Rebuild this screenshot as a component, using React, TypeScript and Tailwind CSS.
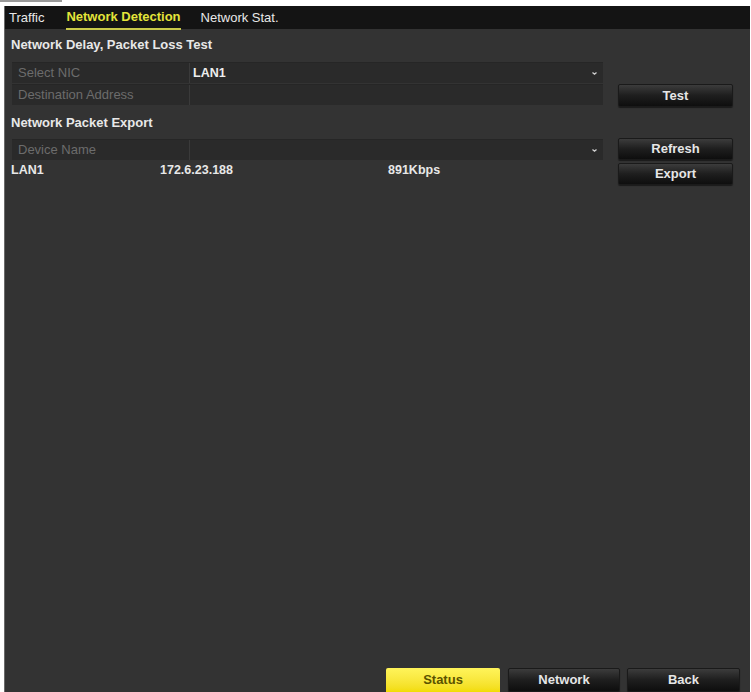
import React from "react";

const font = { fontFamily: '"Liberation Sans", Arial, sans-serif' };

function Arrow() {
  return (
    <svg width="7" height="5" viewBox="0 0 7 5" className="mr-[5px]">
      <path d="M1.5 1.5 L3.5 3.2 L5.5 1.5" stroke="#d0d0d0" strokeWidth="1.3" fill="none" />
    </svg>
  );
}

function Row({ label, value, arrow }: { label: string; value?: string; arrow?: boolean }) {
  return (
    <div className="ml-[1px] flex h-[21px] w-[591px] bg-[#2a2a2a] border-t border-[#262626]">
      <div className="flex w-[178px] items-center border-r border-[#3a3a3a] pl-[6px] text-[13px] text-[#6c6c6c]">
        {label}
      </div>
      <div className="flex flex-1 items-center justify-between pl-[3px] text-[12.5px] font-bold text-[#eeeeee]">
        <span>{value ?? ""}</span>
        {arrow ? <Arrow /> : null}
      </div>
    </div>
  );
}

function DarkButton({ label, w = "w-[115px]", h = "h-[22px]" }: { label: string; w?: string; h?: string }) {
  return (
    <div
      className={`${w} ${h} flex items-center justify-center rounded-[2px] border border-[#1a1a1a] bg-gradient-to-b from-[#3c3c3c] via-[#1e1e1e] to-[#0e0e0e] text-[13px] font-bold text-[#e6e6e6] shadow-[0_1px_1px_rgba(0,0,0,0.5)]`}
    >
      {label}
    </div>
  );
}

export default function App() {
  return (
    <div className="relative h-[692px] w-[751px] overflow-hidden bg-white" style={font}>
      <div className="h-[2px] w-[62px] bg-[#9a9a9a]" />
      <div className="ml-[4px] mt-[4px] flex h-[686px] w-[746px] flex-col border-l border-[#6a6a6a] bg-[#333333]">
        {/* Tab bar */}
        <div className="flex h-[23px] items-center bg-[#141414] text-[13px]">
          <span className="ml-[4px] text-[#e8e8e8]">Traffic</span>
          <span className="ml-[22px] border-b-2 border-[#c9c94a] pb-[1px] pt-[2px] font-semibold text-[#e4e43a]">
            Network Detection
          </span>
          <span className="ml-[20px] text-[#e8e8e8]">Network Stat.</span>
        </div>

        {/* Section 1 */}
        <div className="flex h-[78px] pl-[6px]">
          <div className="w-[592px]">
            <div className="flex h-[32px] items-center text-[13px] font-bold text-[#e8e8e8]">
              Network Delay, Packet Loss Test
            </div>
            <div className="h-[1px]" />
            <Row label="Select NIC" value="LAN1" arrow />
            <div className="h-[1px]" />
            <Row label="Destination Address" />
          </div>
          <div className="ml-[15px] pt-[55px]">
            <DarkButton label="Test" h="h-[23px]" />
          </div>
        </div>

        {/* Section 2 */}
        <div className="flex pl-[6px]">
          <div className="w-[592px]">
            <div className="flex h-[32px] items-center text-[13px] font-bold text-[#e8e8e8]">
              Network Packet Export
            </div>
            <Row label="Device Name" arrow />
            <div className="flex h-[21px] items-center text-[12.5px] font-bold text-[#e8e8e8]">
              <span className="w-[149px]">LAN1</span>
              <span className="w-[228px]">172.6.23.188</span>
              <span>891Kbps</span>
            </div>
          </div>
          <div className="ml-[15px] flex flex-col gap-[3px] pt-[31px]">
            <DarkButton label="Refresh" />
            <DarkButton label="Export" />
          </div>
        </div>

        {/* Bottom buttons */}
        <div className="mt-auto flex justify-end pr-[10px]">
          <div className="flex h-[24px] w-[114px] items-center justify-center rounded-t-[2px] bg-gradient-to-b from-[#fff45a] to-[#f2dc00] text-[13px] font-bold text-[#5a5200]">
            Status
          </div>
          <div className="ml-[8px]">
            <DarkButton label="Network" w="w-[112px]" h="h-[24px]" />
          </div>
          <div className="ml-[7px]">
            <DarkButton label="Back" w="w-[113px]" h="h-[24px]" />
          </div>
        </div>
      </div>
    </div>
  );
}
